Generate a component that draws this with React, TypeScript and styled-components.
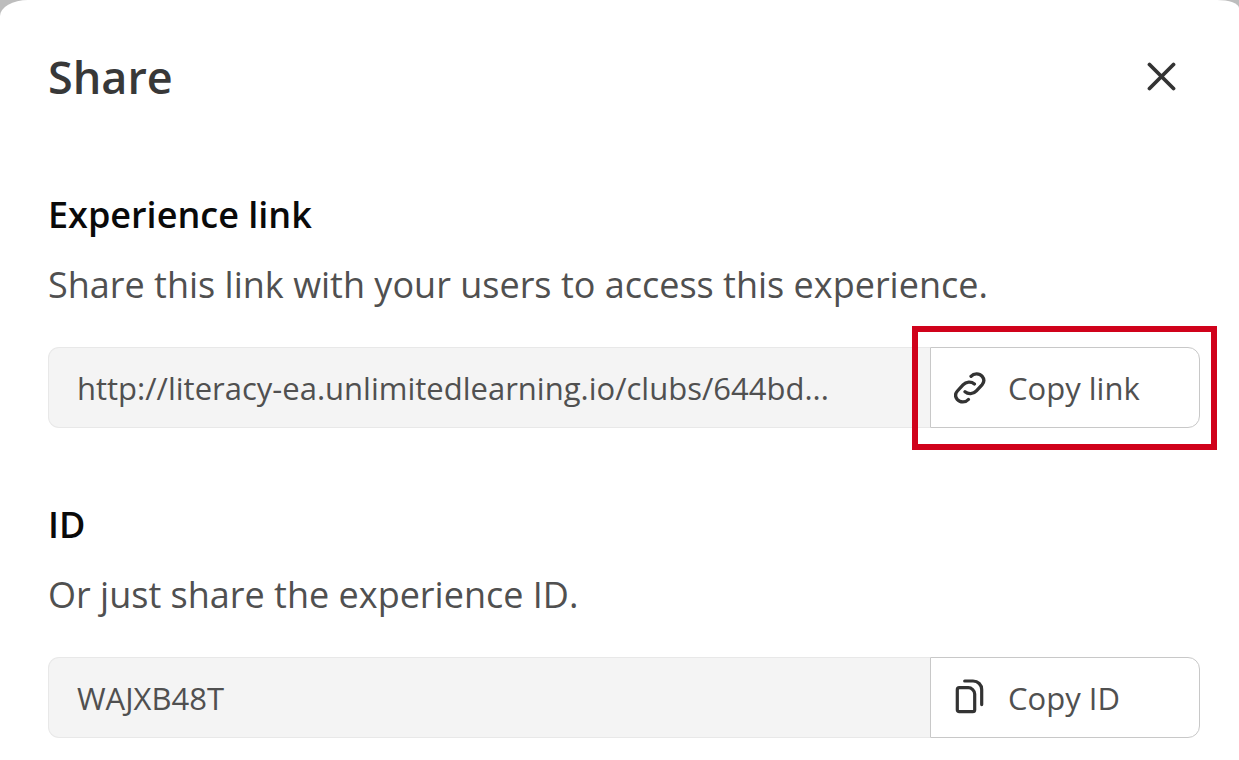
import React from "react";
import styled, { createGlobalStyle } from "styled-components";

const GlobalStyle = createGlobalStyle`
  * { box-sizing: border-box; }
  body {
    margin: 0;
    background: #bdbdbd;
    font-family: "Open Sans", sans-serif;
    color: #3f3f3f;
  }
`;

const Dialog = styled.main`
  min-height: 100vh;
  padding: 43px 39px 22px 48px;
  background: #fff;
  border-radius: 28px 22px 0 0 / 16px 8px 0 0;
`;

const Header = styled.header`
  display: flex;
  align-items: center;
  justify-content: space-between;
  margin-bottom: 80px;
`;

const Title = styled.h1`
  margin: 0;
  font-size: 45px;
  line-height: 67px;
  font-weight: 600;
  color: #383838;
`;

const CloseButton = styled.button`
  display: flex;
  margin-right: 20px;
  padding: 4px;
  border: 0;
  background: none;
`;

const Section = styled.section`
  & + & {
    margin-top: 72px;
  }
`;

const Heading = styled.h2`
  margin: 0 0 20px;
  font-size: 36px;
  line-height: 50px;
  font-weight: 600;
  color: #0a0a0a;
`;

const Description = styled.p`
  margin: 0 0 37px;
  font-size: 36px;
  line-height: 50px;
  color: #505050;
`;

const Row = styled.div`
  display: flex;
  height: 81px;
`;

const Field = styled.input`
  flex: 1;
  min-width: 0;
  padding: 0 28px;
  border: 1px solid #e8e8e8;
  border-right: 0;
  border-radius: 11px 0 0 11px;
  background: #f4f4f4;
  font: inherit;
  font-size: 31px;
  color: #505050;
  outline: 0;
`;

const ButtonSlot = styled.div<{ $marked?: boolean }>`
  position: relative;
  display: flex;
  width: 270px;

  ${(p) =>
    p.$marked &&
    `&::after {
      content: "";
      position: absolute;
      inset: -21px -17px -22px -18px;
      border: 6px solid #d0021b;
      pointer-events: none;
    }`}
`;

const CopyButton = styled.button`
  display: flex;
  flex: 1;
  align-items: center;
  gap: 22px;
  padding: 0 23px;
  border: 1px solid #c8c8c8;
  border-radius: 0 12px 12px 0;
  background: #fff;
  font: inherit;
  font-size: 31px;
  color: #505050;
`;

const Icon = styled.svg<{ $weight?: number }>`
  flex: none;
  fill: none;
  stroke: #333;
  stroke-width: ${(p) => p.$weight ?? 3};
  stroke-linecap: round;
  stroke-linejoin: round;
`;

const linkHalf =
  "M17 4.3C20 .9 25.4 1.1 28.2 4.4C30.5 7.3 30.1 10.4 28 12.8L22.4 18.9C19.3 22.3 14.2 22.5 11 19.8";

const LinkIcon = () => (
  <Icon width="32" height="32" viewBox="0 0 32 32" $weight={3.3} aria-hidden="true">
    <path d={linkHalf} />
    <path d={linkHalf} transform="rotate(180 15.7 15.9)" />
  </Icon>
);

const PagesIcon = () => (
  <Icon width="32" height="40" viewBox="0 0 32 40" $weight={3.2} aria-hidden="true">
    <path d="M5.3 9.7H14.3C17.5 9.7 20.7 12.8 20.7 16V31.7C20.7 33 20 33.7 18.7 33.7H5.3C4 33.7 3.3 33 3.3 31.7V11.7C3.3 10.4 4 9.7 5.3 9.7Z" />
    <path d="M10.7 3H19C24 3 27.7 6.8 27.7 11.6V26.6" />
  </Icon>
);

export default function App() {
  return (
    <>
      <GlobalStyle />
      <Dialog role="dialog" aria-labelledby="share-title">
        <Header>
          <Title id="share-title">Share</Title>
          <CloseButton type="button" aria-label="Close">
            <Icon width="29" height="29" viewBox="0 0 29 29" $weight={3.8} aria-hidden="true">
              <path d="M2.5 2.5L26.5 26.5M26.5 2.5L2.5 26.5" />
            </Icon>
          </CloseButton>
        </Header>
        <Section>
          <Heading id="link-heading">Experience link</Heading>
          <Description>Share this link with your users to access this experience.</Description>
          <Row>
            <Field
              readOnly
              aria-labelledby="link-heading"
              value="http://literacy-ea.unlimitedlearning.io/clubs/644bd..."
            />
            <ButtonSlot $marked>
              <CopyButton type="button">
                <LinkIcon />
                Copy link
              </CopyButton>
            </ButtonSlot>
          </Row>
        </Section>
        <Section>
          <Heading id="id-heading">ID</Heading>
          <Description>Or just share the experience ID.</Description>
          <Row>
            <Field readOnly aria-labelledby="id-heading" value="WAJXB48T" />
            <ButtonSlot>
              <CopyButton type="button">
                <PagesIcon />
                Copy ID
              </CopyButton>
            </ButtonSlot>
          </Row>
        </Section>
      </Dialog>
    </>
  );
}
